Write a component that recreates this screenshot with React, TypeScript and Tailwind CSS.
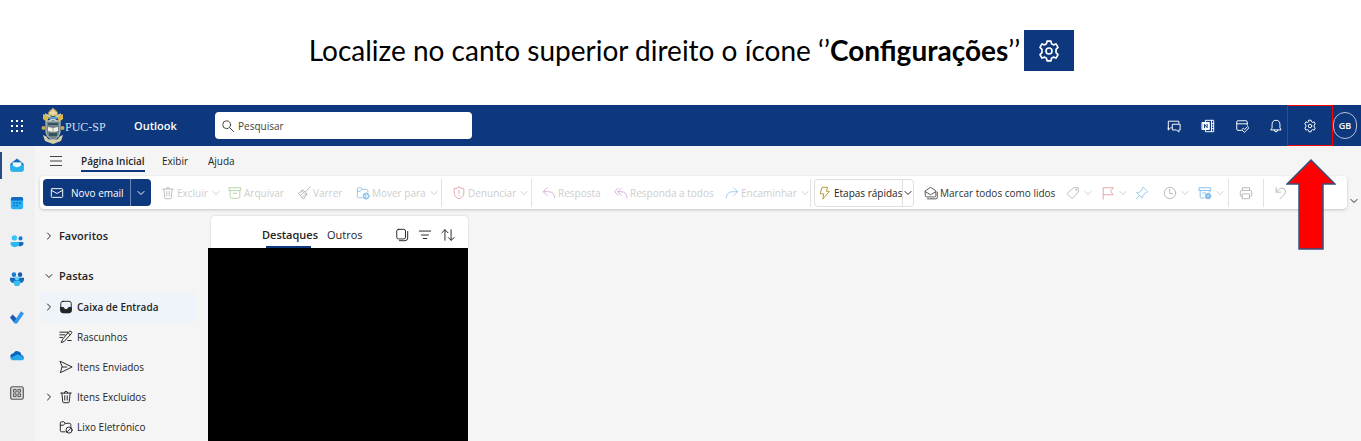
import type { ReactNode } from 'react';

type IconProps = { className?: string; children: ReactNode; size?: 'md' | 'lg' };

function Icon({ className = '', children, size = 'md' }: IconProps) {
  const dim = size === 'lg' ? 'size-6' : 'size-3.5';
  return (
    <svg viewBox="0 0 16 16" fill="none" stroke="currentColor" strokeWidth="1.1" strokeLinecap="round" strokeLinejoin="round" aria-hidden="true" className={`${dim} shrink-0 ${className}`}>
      {children}
    </svg>
  );
}

function Chevron({ className = '', dir = 'down' }: { className?: string; dir?: 'down' | 'right' }) {
  return (
    <svg viewBox="0 0 8 8" fill="none" stroke="currentColor" strokeWidth="1" strokeLinecap="round" strokeLinejoin="round" aria-hidden="true" className={`size-2 shrink-0 ${className}`}>
      <path d={dir === 'down' ? 'M1 2.5 4 5.5 7 2.5' : 'M2.5 1 5.5 4 2.5 7'} />
    </svg>
  );
}

const gear = (
  <>
    <path d="M6.7 1.4h2.6l.4 1.8 1.2.7 1.8-.6L14 5.6l-1.300 1.300v2.200l1.300 1.300-1.300 2.300-1.800-.6-1.200.7-.4 1.800H6.700l-.4-1.800-1.200-.7-1.800.6L2 10.400l1.300-1.300V6.900L2 5.600l1.300-2.300 1.800.6 1.200-.7z" />
    <circle cx="8" cy="8" r="2" />
  </>
);
const trash = <path d="M2 3.500h12M6 3.500a2 2 0 0 1 4 0M3.300 3.500l1 10.200q.1.800.9.800h5.600q.8 0 .9-.8l1-10.200M6.600 6.500v5M9.400 6.500v5" />;
const envelope = <path d="M2.500 3h11q1 0 1 1v8q0 1-1 1h-11q-1 0-1-1V4q0-1 1-1zM1.700 5 8 8.600 14.300 5" />;
const archive = <path d="M1.500 2h13v3.200h-13zM2.500 5.200v7.300q0 1.500 1.500 1.500h8q1.500 0 1.500-1.500V5.200M6 8.300h4" />;
const broom = <path d="m15 1-5 5.500M6.500 4.500l5 4.500-1 1.500-5-4.500zM5.500 6 1.500 8.500l6 6.500 3-4.500M4 10.800l2-1.800M6 13l2-2" />;
const folder = <path d="M7 13.500H3q-1.500 0-1.500-1.500V3.500Q1.500 2 3 2h2.500L7.200 3.800H12q1.500 0 1.500 1.500v2M1.500 6H5l2-2.200" />;
const reply = <path d="M6 2 1.500 6.500 6 11M1.500 6.500h6q6.500 0 7 7" />;
const replyAll = <path d="M4.500 2.500.8 6.500l3.700 4M8 2.500l-3.700 4 3.700 4M4.300 6.500H8q6.500 0 7 7" />;
const forward = <path d="M10 2l4.500 4.500L10 11M14.500 6.500h-6q-6.500 0-7 7" />;
const bolt = <path d="M5 1.500h6L9.500 6H13l-7.500 9 1-6H3z" />;

function Divider() {
  return <span className="h-7 w-px shrink-0 bg-[#e2e2e2]" />;
}

type ToolProps = { label: string; icon: ReactNode; text?: boolean; menu?: boolean; color: string; width: string; active?: boolean };

function Tool({ label, icon, text = true, menu, color, width, active }: ToolProps) {
  return (
    <button type="button" aria-label={label} className={`flex h-7 shrink-0 items-center whitespace-nowrap ${width} ${active ? 'text-[#303030]' : 'text-[#cdcdcd]'}`}>
      <Icon className={color}>{icon}</Icon>
      {text && <span className="ml-0.5">{label}</span>}
      {menu && <Chevron className="ml-1" />}
    </button>
  );
}

function Crest() {
  return (
    <svg viewBox="0 0 24 36" className="h-9 w-6 shrink-0" aria-hidden="true">
      <path d="M7 8Q7 2 12 1q5 1 5 7z" fill="#d8c88a" stroke="#918243" />
      <path d="M12 0v8M8 5h8" stroke="#f0e6bd" />
      <path d="M2 6l6 3-2 5-4-3zM22 6l-6 3 2 5 4-3z" fill="#dbb847" />
      <path d="M4 6l15 9M20 6 5 15" stroke="#d7d3bd" strokeWidth="1.5" />
      <path d="M5 13h14v11q-1 6-7 8-6-2-7-8z" fill="#71828a" stroke="#c9cfc2" />
      <path d="M7 15h10v2H7zM8 25h8v3H8z" fill="#33545f" />
      <path d="m7 19 5 1 5-1v4l-5 1-5-1z" fill="#f2f0e4" />
      <path d="M12 20v4" stroke="#71828a" strokeWidth=".7" />
      <circle cx="2.5" cy="20" r="2" fill="#c8a74a" />
      <circle cx="21.5" cy="20" r="2" fill="#c8a74a" />
      <path d="M2 27q4 1 5 4 5 2 10 0 1-3 5-4l-2 6-8 3-8-3z" fill="#d5d0a6" />
      <path d="M8 10h8" stroke="#5aa0d8" strokeWidth="2" />
    </svg>
  );
}

const railIcons: { label: string; art: ReactNode }[] = [
  { label: 'Email', art: <><path d="M.5 6.500 8 .5l7.500 6V13q0 2.500-2.500 2.500H3Q.5 15.500.5 13z" fill="#116cc0" /><path d="M3 5h10v6H3z" fill="#e8fbff" /><path d="m.5 7 7.500 4 7.500-4v6q0 2.500-2.500 2.500H3Q.5 15.500.5 13z" fill="#25b5ed" /></> },
  { label: 'Calendário', art: <><rect x="1" y="1" width="14" height="14" rx="2.500" fill="#25b0f4" /><path d="M1 5V3.500Q1 1 3.500 1h9Q15 1 15 3.500V5z" fill="#1469bf" /><path d="M4 8h1.500M7.300 8h1.500M10.500 8H12M4 11h1.500M7.300 11h1.500" stroke="#075aa8" strokeWidth="1.500" /></> },
  { label: 'Pessoas', art: <><circle cx="5" cy="4.500" r="3" fill="#34c4f7" /><circle cx="12" cy="5" r="2.300" fill="#1478ce" /><path d="M8 9h6q2 0 1.500 2-1 3-5.500 3z" fill="#1268bd" /><path d="M2 9h7q2 0 1.500 2.500Q9.500 15 5.500 15T.5 11.500Q0 9 2 9z" fill="#2bb8f3" /></> },
  { label: 'Grupos', art: <><circle cx="4.500" cy="3" r="2.600" fill="#167fd2" /><circle cx="11.500" cy="3" r="2.600" fill="#145eae" /><path d="M0 6.500h16q.5 6-4 6H4q-4.500 0-4-6z" fill="#1268bd" /><circle cx="8" cy="7.500" r="2.300" fill="#58dafa" /><path d="M4 10h8q0 6.500-4 6.500T4 10z" fill="#32bff4" /></> },
  { label: 'Tarefas', art: <><path d="m0 8.500 3-3.500 6 6-3.500 4.500z" fill="#1958b4" /><path d="m4.500 13.500 8-12 3.500 2.500L8 15.500H5.500z" fill="#3299ee" /></> },
  { label: 'OneDrive', art: <><path d="M1 12q-2-5 3-6 2-4 6-2 3 1 3 4 4 1 2 5z" fill="#0864bf" /><path d="M3 14q-3-1-2-3l8-4 6 3q2 3-1 4z" fill="#28a8ea" /></> },
  { label: 'Mais aplicativos', art: <><rect x=".8" y=".8" width="14.400" height="14.400" rx="2" fill="#d7d7d7" stroke="#555" strokeWidth="1.300" /><path d="M4 4h3v3H4zM9 4h3v3H9zM4 9h3v3H4zM9 9h3v3H9z" fill="none" stroke="#555" strokeWidth="1.100" /></> },
];

const folders: { name: string; expand?: boolean; selected?: boolean; icon: ReactNode }[] = [
  { name: 'Caixa de Entrada', expand: true, selected: true, icon: <><rect x="2" y="1.500" width="12" height="13" rx="2.500" /><path d="M2 8.500h3Q6 11 8 11t3-2.500h3V12q0 2.500-2.500 2.500h-7Q2 14.500 2 12z" fill="currentColor" /></> },
  { name: 'Rascunhos', icon: <path d="M1 2.500h9M1 5.500h6M1 8.500h3M12 1.500q2-1 2.500 1 .3 1-.5 1.700L6 13l-3.500 1.500L4 11zM10.500 3.200 12.700 5.500M10 12h4" /> },
  { name: 'Itens Enviados', icon: <path d="M1.500 1.500 15 8 1.500 14.500 3.500 8zM3.500 8H9" /> },
  { name: 'Itens Excluídos', expand: true, icon: trash },
  { name: 'Lixo Eletrônico', icon: <>{folder}<circle cx="11.500" cy="11.500" r="3.500" /><path d="m9 14 5-5" /></> },
];

const headerIcons: { label: string; art: ReactNode }[] = [
  { label: 'Chat', art: <path d="M5 10H4l-2.500 2.500V2.500h12V5M1.500 10v2.500M6.500 6H15v6.500h-1.500V15L11 12.500H6.500z" /> },
  { label: 'OneNote', art: <><path d="M5 3V1.500h9.500v13H5V13M12 1.500v13M12 5h2.500M12 8h2.500M12 11h2.500" /><rect x="1.500" y="4" width="8" height="8" fill="#fff" /><path d="M4 10V6l3 4V6" stroke="#0d387d" /></> },
  { label: 'Meu dia', art: <path d="M14 7V3.500q0-1.500-1.500-1.500h-9Q2 2 2 3.500v8Q2 13 3.500 13H7M2 5.500h12M8 12l1.500-1.500 1.500 1.500 3.500-3.500L16 10l-5 5z" /> },
  { label: 'Notificações', art: <path d="M3.500 10V6.500Q3.500 1.500 8 1.500t4.500 5V10l1.300 2.500H2.200zM6 12.500q0 2.200 2 2.200t2-2.200" /> },
];

export default function App() {
  return (
    <div className="flex min-h-screen flex-col overflow-hidden bg-white font-['Open_Sans','Noto_Sans',sans-serif] text-[10px] leading-4 text-[#242424]">
      <h1 className="flex h-[105px] shrink-0 items-start justify-center gap-1 pt-[30px] pl-[22px] font-[Lato,sans-serif] text-[28px] leading-[41px] text-black">
        <span>Localize no canto superior direito o ícone ‘’<b>Configurações</b>’’</span>
        <span className="flex h-[41px] w-[50px] items-center justify-center bg-[#0d387d] text-white">
          <Icon size="lg">{gear}</Icon>
        </span>
      </h1>

      <header className="flex h-[41px] shrink-0 items-center bg-[#0d387d] text-white">
        <button type="button" aria-label="Iniciador de aplicativos" className="flex w-[41px] justify-start pl-[11px]">
          <svg viewBox="0 0 12 12" className="size-3 fill-current" aria-hidden="true">
            <path d="M0 0h2v2H0zM5 0h2v2H5zM10 0h2v2h-2zM0 5h2v2H0zM5 5h2v2H5zM10 5h2v2h-2zM0 10h2v2H0zM5 10h2v2H5zM10 10h2v2h-2z" />
          </svg>
        </button>
        <Crest />
        <span className="w-[69px] pt-0.5 font-['Liberation_Serif',serif] text-xs text-[#d5dfec]">PUC-SP</span>
        <span className="w-[81px] text-[11px] font-semibold">Outlook</span>
        <label className="flex h-[27px] w-[257px] items-center gap-[3px] rounded-sm bg-white px-1.5 text-[#424242]">
          <Icon><circle cx="6.500" cy="6.500" r="4.500" /><path d="m10 10 4.500 4.500" /></Icon>
          <input type="search" aria-label="Pesquisar" placeholder="Pesquisar" className="w-full min-w-0 bg-transparent outline-none placeholder:text-[#424242]" />
        </label>
        <div className="ml-auto flex items-center">
          {headerIcons.map((item) => (
            <button type="button" key={item.label} aria-label={item.label} className="flex w-[34px] justify-center">
              <Icon>{item.art}</Icon>
            </button>
          ))}
          <button type="button" aria-label="Configurações" className="relative z-10 -ml-1.5 flex h-[41px] w-[46px] items-center justify-center border border-[#f00]">
            <Icon>{gear}</Icon>
            <svg viewBox="0 0 50 92" aria-hidden="true" className="pointer-events-none absolute top-[53px] left-[-2px] h-[92px] w-[50px]">
              <path d="M25 1 49 25H37v65H13V25H1z" fill="#f00" stroke="#35527f" strokeWidth="1.500" />
            </svg>
          </button>
          <button type="button" aria-label="Conta GB" className="mr-1 flex h-[27px] w-6 items-center justify-center rounded-full border border-[#b6c3d8] text-[9px] font-semibold">GB</button>
        </div>
      </header>

      <div className="flex flex-1 bg-[#f5f5f5]">
        <nav aria-label="Aplicativos" className="w-[35px] shrink-0 bg-[#f0f0f0]">
          {railIcons.map((item, i) => (
            <a href="#" key={item.label} aria-label={item.label} className="flex h-[38px] items-center">
              <span className={`h-[27px] w-0.5 ${i === 0 ? 'bg-[#244b8a]' : ''}`} />
              <svg viewBox="0 0 16 16" className="ml-2 size-3.5" aria-hidden="true">{item.art}</svg>
            </a>
          ))}
        </nav>

        <main className="flex min-w-0 flex-1 flex-col">
          <div className="flex h-[30px] shrink-0 items-center pl-[15px]">
            <button type="button" aria-label="Menu" className="w-[31px]">
              <svg viewBox="0 0 12 10" className="h-2.5 w-3 stroke-[#424242]" aria-hidden="true"><path d="M0 .5h12M0 5h12M0 9.500h12" /></svg>
            </button>
            <div role="tablist" className="flex">
              <button type="button" role="tab" aria-selected="true" className="w-[81px] text-left font-semibold whitespace-nowrap"><span className="inline-block border-b-2 border-[#0d387d] pt-[3px] pb-px">Página Inicial</span></button>
              <button type="button" role="tab" className="w-[46px] text-left">Exibir</button>
              <button type="button" role="tab" className="text-left">Ajuda</button>
            </div>
          </div>

          <div className="flex items-center">
            <div role="toolbar" aria-label="Ações" className="ml-[5px] flex h-[33px] min-w-0 flex-1 items-center overflow-hidden rounded bg-white pl-[3px] shadow-[0_1px_3px_#0003]">
              <div className="mr-2.5 flex h-[27px] shrink-0 rounded-sm bg-[#0d387d] text-white">
                <button type="button" className="flex w-[87px] items-center gap-[7px] pl-[7px] whitespace-nowrap"><Icon>{envelope}</Icon>Novo email</button>
                <button type="button" aria-label="Mais opções de novo email" className="flex w-[21px] items-center justify-center border-l border-[#6d88b2]"><Chevron /></button>
              </div>
              <Tool label="Excluir" icon={trash} menu color="text-[#c0c0c0]" width="w-[67px]" />
              <Tool label="Arquivar" icon={archive} color="text-[#b8d4a8]" width="w-[69px]" />
              <Tool label="Varrer" icon={broom} color="text-[#b5b5b5]" width="w-[59px]" />
              <Tool label="Mover para" icon={<>{folder}<circle cx="11.500" cy="11.500" r="3.500" fill="currentColor" /><path d="M9.500 11.500h4m-1.500-1.500 1.500 1.500-1.500 1.500" stroke="#fff" /></>} menu color="text-[#94c5eb]" width="w-[85px]" />
              <Divider />
              <span className="w-2.5 shrink-0" />
              <Tool label="Denunciar" icon={<path d="M8 1.300Q10 3 13.500 3v5q0 4.500-5.500 6.700Q2.500 12.500 2.500 8V3Q6 3 8 1.300zM8 4.800v4M8 11v.2" />} menu color="text-[#e6a9ac]" width="w-[79px]" />
              <Divider />
              <span className="w-2.5 shrink-0" />
              <Tool label="Resposta" icon={reply} color="text-[#d4b0d9]" width="w-[72px]" />
              <Tool label="Responda a todos" icon={replyAll} color="text-[#d4b0d9]" width="w-[111px]" />
              <Tool label="Encaminhar" icon={forward} menu color="text-[#a3cdf0]" width="w-[85px]" />
              <Divider />
              <div className="mr-2.5 ml-[3px] flex h-7 w-[100px] shrink-0 rounded-sm border border-[#e0e0e0]">
                <button type="button" className="flex flex-1 items-center gap-0.5 pl-[3px] whitespace-nowrap"><Icon className="text-[#bd9632]">{bolt}</Icon>Etapas rápidas</button>
                <button type="button" aria-label="Mais etapas rápidas" className="flex w-3 items-center justify-center border-l border-[#e0e0e0]"><Chevron /></button>
              </div>
              <Tool label="Marcar todos como lidos" icon={<path d="M1.500 5.500 7.500 1.500l6 4V11q0 1.500-1.500 1.500H3q-1.500 0-1.500-1.500zM1.500 6.500l6 3.500 6-3.500M4 14.700h9.500q1.700 0 1.700-1.700V7" />} active color="text-[#555]" width="w-[142px]" />
              <Tool label="Categorizar" text={false} menu icon={<><path d="M9 2h5v5l-7 7.500L1.500 9z" /><circle cx="11.500" cy="4.500" r=".5" /></>} color="text-[#b9b9b9]" width="w-[35px]" />
              <Tool label="Sinalizar" text={false} menu icon={<path d="M2.500 15V2H14l-3 4 3 4H2.500" />} color="text-[#e2a4a6]" width="w-[34px]" />
              <Tool label="Fixar" text={false} icon={<path d="m9.500 1.500 5 5-1.500 1-1.500.5L9 11l-.5 3L2 7.500 5 7l3-2.500.5-1.500zM5.200 10.800 1.500 14.500" />} color="text-[#9dcbed]" width="w-[28px]" />
              <Tool label="Adiar" text={false} menu icon={<><circle cx="8" cy="8" r="6.500" /><path d="M7.500 4v4.500H11" /></>} color="text-[#b9b9b9]" width="w-[35px]" />
              <Tool label="Política" text={false} menu icon={<><path d="M1.500 2h13v3.200h-13zM2.500 5.200v7q0 1.500 1.500 1.500h3M13.500 5.200V7M5.500 8h3" /><circle cx="11.500" cy="11.500" r="2.700" fill="currentColor" strokeWidth="2" strokeDasharray="1.500 1.200" /><circle cx="11.500" cy="11.500" r=".8" fill="#fff" stroke="none" /></>} color="text-[#87bde9]" width="w-[30px]" />
              <Divider />
              <span className="w-2.5 shrink-0" />
              <Tool label="Imprimir" text={false} icon={<path d="M4 5V2h8v3M4 12H3q-1.500 0-1.500-1.500V7Q1.500 5 3.500 5h9q2 0 2 2v3.500Q14.500 12 13 12h-1M4 9h8v5.500H4z" />} color="text-[#b9b9b9]" width="w-[24px]" />
              <Divider />
              <span className="w-2.5 shrink-0" />
              <Tool label="Desfazer" text={false} icon={<path d="M2.500 2v5h5M2.500 7 6 3.500q3-2.500 6 0 2.500 3 0 6L7 14.500" />} color="text-[#b9b9b9]" width="w-[27px]" />
            </div>
            <button type="button" aria-label="Opções da faixa" className="flex w-3.5 shrink-0 justify-center pt-4"><Chevron /></button>
          </div>

          <div className="flex flex-1">
            <aside className="w-[173px] shrink-0 pt-[11px] pr-3 pl-[5px]">
              <button type="button" className="flex h-8 items-center gap-1.5 pl-[5px] text-[11px] font-semibold"><Chevron dir="right" />Favoritos</button>
              <button type="button" className="mt-2 flex h-8 items-center gap-1.5 pl-[5px] text-[11px] font-semibold"><Chevron />Pastas</button>
              <ul>
                {folders.map((f) => (
                  <li key={f.name}>
                    <a href="#" className={`flex h-[30px] items-center pl-[5px] whitespace-nowrap ${f.selected ? 'bg-[#eff4fa] font-semibold' : ''}`}>
                      <span className="w-3.5">{f.expand && <Chevron dir="right" />}</span>
                      <Icon className="mr-1">{f.icon}</Icon>
                      {f.name}
                    </a>
                  </li>
                ))}
              </ul>
            </aside>
            <section aria-label="Mensagens" className="flex w-[260px] shrink-0 flex-col pt-[7px]">
              <div className="ml-[3px] flex h-8 items-end rounded-t-sm bg-white pl-[51px] text-[11px] shadow-[0_0_2px_#0003]">
                <button type="button" className="flex h-6 w-[65px] flex-col items-start font-semibold"><span className="h-[22px] pt-[3px]">Destaques</span><span className="ml-1 h-0.5 w-[45px] shrink-0 bg-[#0d387d]" /></button>
                <button type="button" className="h-6 pb-[3px]">Outros</button>
                <div className="mr-[13px] mb-1.5 ml-auto flex gap-[9px]">
                  <button type="button" aria-label="Selecionar"><Icon><rect x="2" y="1.500" width="10" height="11" rx="2" /><path d="M5 14.500h6.500q3 0 3-3V4" /></Icon></button>
                  <button type="button" aria-label="Filtrar"><Icon><path d="M1.500 3.500h13M4 8h8M6 12h4" /></Icon></button>
                  <button type="button" aria-label="Classificar"><Icon><path d="M4.500 14V2M1 5.500 4.500 2 8 5.500M11.500 2v12M8.500 11l3 3 3.500-3" /></Icon></button>
                </div>
              </div>
              <div className="min-h-48 flex-1 bg-black" />
            </section>
          </div>
        </main>
      </div>
    </div>
  );
}
